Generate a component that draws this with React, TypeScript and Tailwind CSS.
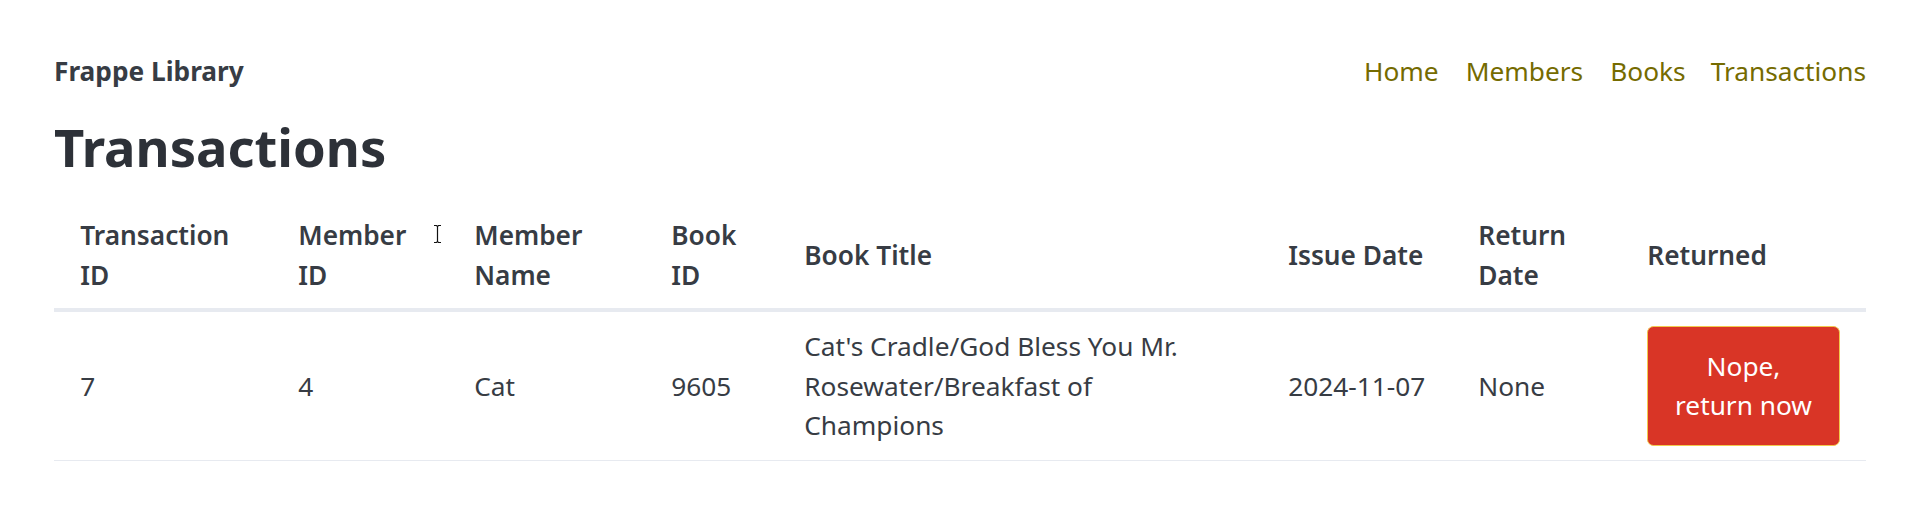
import React from "react";

const cols = [
  { label: ["Transaction", "ID"], w: "w-[218px]" },
  { label: ["Member", "ID"], w: "w-[176px]" },
  { label: ["Member", "Name"], w: "w-[197px]" },
  { label: ["Book", "ID"], w: "w-[133px]" },
  { label: ["Book Title"], w: "w-[484px]" },
  { label: ["Issue Date"], w: "w-[190px]" },
  { label: ["Return", "Date"], w: "w-[169px]" },
  { label: ["Returned"], w: "w-[245px]" },
];

const td = "px-[26.25px] py-[14px] align-middle border-b border-[#e7eaf0]";

export default function App() {
  return (
    <div
      className="relative min-h-[510px] bg-white text-[#373c44] text-[26.25px] leading-[1.5] pl-[54px] pr-[50px] pt-[52px]"
      style={{ fontFamily: '"Noto Sans", "Open Sans", sans-serif' }}
    >
      <nav className="flex items-center justify-between h-[39.4px]">
        <strong className="font-bold text-[#373c44]">Frappe Library</strong>
        <ul className="flex items-center text-[#756b00]">
          <li><a>Home</a></li>
          <li className="ml-[27px]"><a>Members</a></li>
          <li className="ml-[27px]"><a>Books</a></li>
          <li className="ml-[25px]"><a>Transactions</a></li>
        </ul>
      </nav>
      <h1 className="mt-[26px] mb-[27px] text-[52.5px] leading-[1.125] font-bold text-[#2d3138]">
        Transactions
      </h1>
      <table className="w-full table-fixed border-collapse">
        <thead>
          <tr>
            {cols.map((c, i) => (
              <th
                key={i}
                className={`${c.w} px-[26.25px] py-[13px] text-left align-middle font-semibold text-[#373c44] border-b-4 border-[#e7eaf0]`}
              >
                {c.label.map((l, j) => (
                  <React.Fragment key={j}>
                    {j > 0 && <br />}
                    {l}
                  </React.Fragment>
                ))}
              </th>
            ))}
          </tr>
        </thead>
        <tbody>
          <tr>
            <td className={td}>7</td>
            <td className={td}>4</td>
            <td className={td}>Cat</td>
            <td className={td}>9605</td>
            <td className={td}>
              Cat's Cradle/God Bless You Mr. Rosewater/Breakfast of Champions
            </td>
            <td className={td}>2024-11-07</td>
            <td className={td}>None</td>
            <td className={td}>
              <button className="w-full rounded-[6.5px] border border-[#f2c94c] bg-[#d93526] px-[26.25px] py-[19.7px] text-center text-white leading-[1.5]">
                Nope,
                <br />
                return now
              </button>
            </td>
          </tr>
        </tbody>
      </table>
      <svg
        className="absolute left-[433px] top-[224px]"
        width="9"
        height="20"
        viewBox="0 0 9 20"
        fill="none"
      >
        <path d="M1 1.5h2.5L4.5 2.5L5.5 1.5H8M4.5 2.5V17.5M1 18.5h2.5L4.5 17.5L5.5 18.5H8" stroke="#ffffff" strokeWidth="3" />
        <path d="M1 1.5h2.5L4.5 2.5L5.5 1.5H8M4.5 2.5V17.5M1 18.5h2.5L4.5 17.5L5.5 18.5H8" stroke="#111" strokeWidth="1.2" />
      </svg>
    </div>
  );
}
